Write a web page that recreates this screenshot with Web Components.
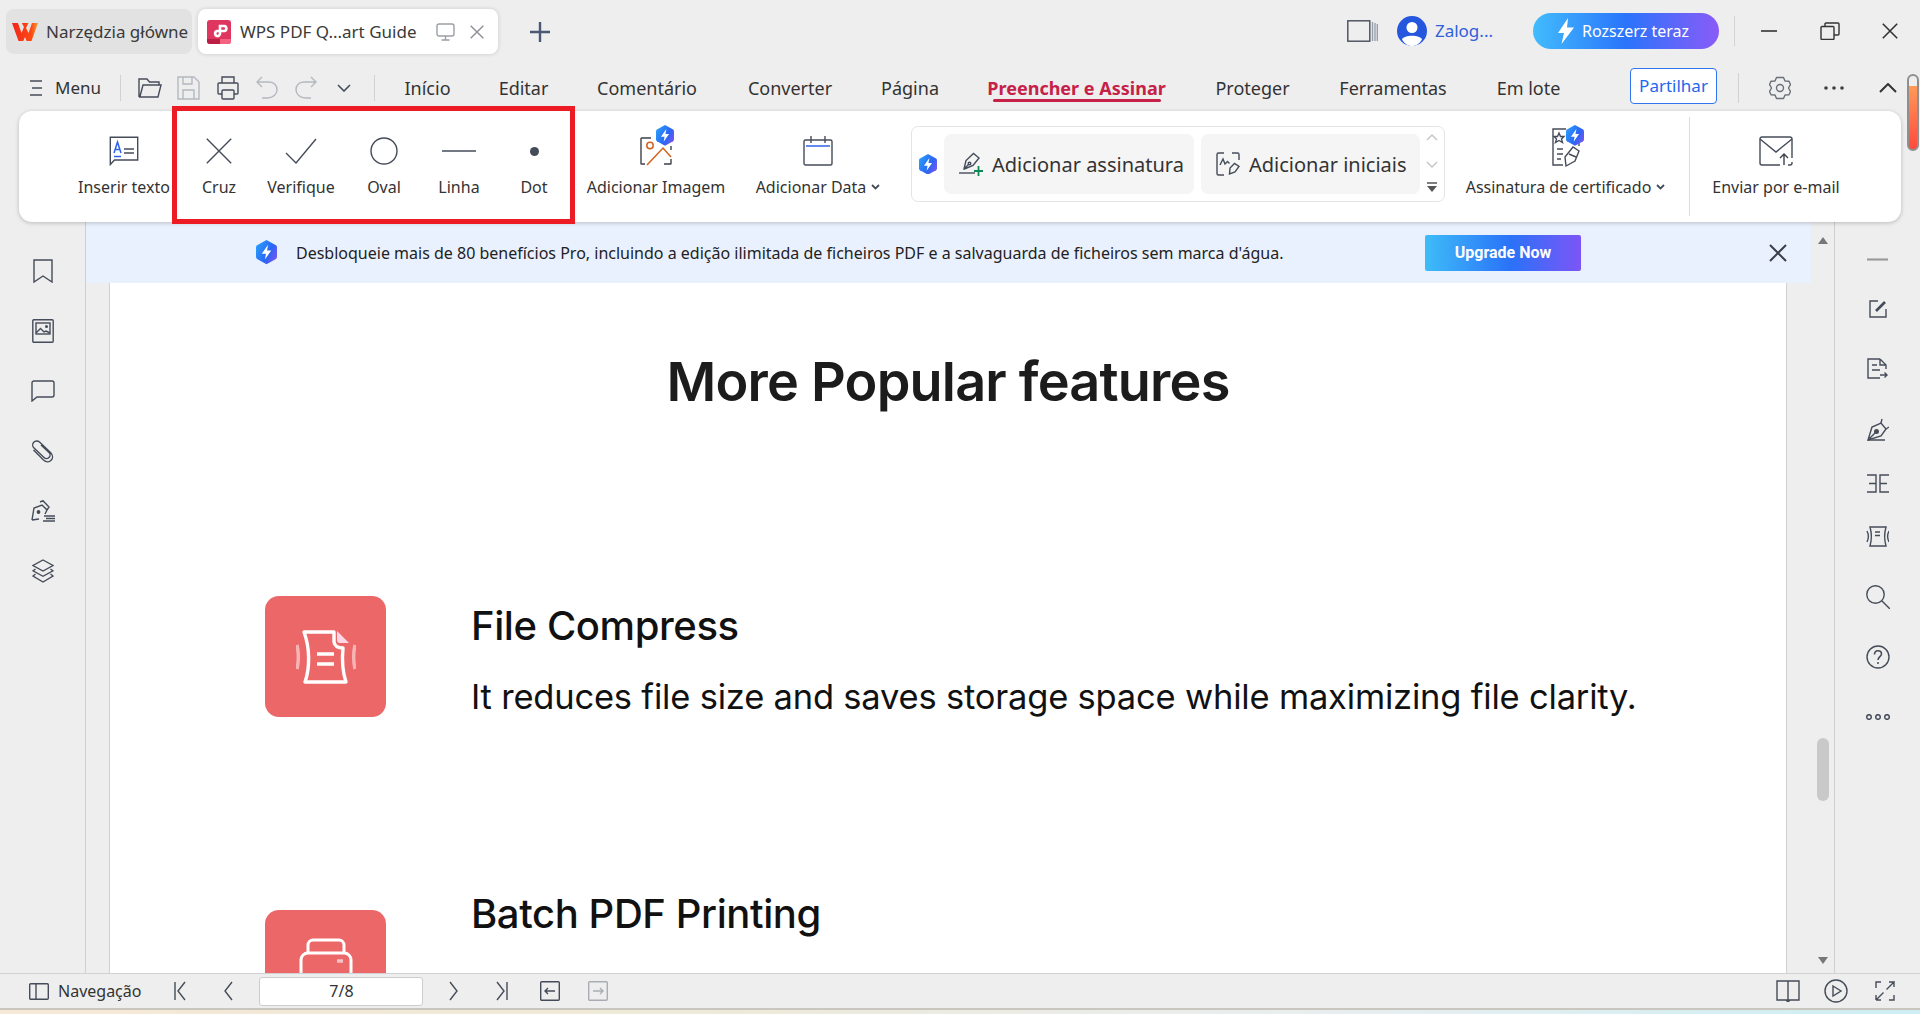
<!DOCTYPE html>
<html lang="pt">
<head>
<meta charset="utf-8">
<title>WPS PDF</title>
<style>
    html, body { margin: 0; height: 100%; }
    body { overflow: hidden; background: #eeeeee; font-family: "Noto Sans", "Open Sans", sans-serif; color: #333; }
</style>
</head>
<body>
<wps-app></wps-app>
<script>
(function (){
    /* Icon artwork: [viewBox width, viewBox height, markup]. */
    const ICONS = {
        wps: [26, 20, `<defs><linearGradient id="w" x1="0" x2="1"><stop offset="0" stop-color="#f0261a"/><stop offset="0.75" stop-color="#ff4a12"/><stop offset="1" stop-color="#e9a23a"/></linearGradient></defs><path fill="url(#w)" stroke="none" d="M0 1H6L9.5 11 12 5 9.8 1H16.5L14 6 16.5 11 20 1H26L19.5 19H14.6L13 15 11.3 19H6.5ZM12.8 1.5 15 1.5 13.5 4Z"/>`],
        pdf: [24, 24, `<rect width="24" height="24" rx="3" fill="#df3660" stroke="none"/><path d="M0 19H13V24H3A3 3 0 0 1 0 21Z" fill="#bb1e45" stroke="none"/><path d="M13 19H24V21A3 3 0 0 1 21 24H13Z" fill="#f4627f" stroke="none"/><path stroke="#fff" stroke-width="2.6" d="M13 11V6H17.5A2.6 2.6 0 0 1 17.5 11H10A2.6 2.6 0 0 0 10 16 2.6 2.6 0 0 0 13 13.500V11"/>`],
        monitor: [19, 18, `<rect x="1" y="1" width="17" height="12" rx="2"/><path d="M9.500 13V17M5.500 17H13.500"/>`],
        close: [14, 14, `<path d="M.7.7 13.300 13.300M13.300.7.7 13.300"/>`],
        plus: [20, 20, `<path stroke-width="2.4" d="M10 0V20M0 10H20"/>`],
        pages: [31, 22, `<rect x=".8" y=".8" width="22" height="20.400"/><path d="M25.500 2V21M28 3V21M30.300 4V21" stroke="#9aa0ab"/>`],
        avatar: [30, 30, `<circle cx="15" cy="15" r="15" fill="#2457de" stroke="none"/><circle cx="15" cy="11.500" r="5.500" fill="#fff" stroke="none"/><path d="M5 23.500C7 18.500 23 18.500 25 23.500 22.500 28 18.500 30 15 30 11.500 30 7.500 28 5 23.500Z" fill="#fff" stroke="none"/>`],
        bolt: [16, 26, `<path fill="#fff" stroke="none" d="M10 0 0 15H6L3.500 26 16 9.500H9Z"/>`],
        minus: [16, 2, `<path d="M0 1H16"/>`],
        restore: [20, 18, `<rect x="1" y="4.500" width="13" height="13" rx="1"/><path d="M5 4.500V2A1 1 0 0 1 6 1H18A1 1 0 0 1 19 2V12A1 1 0 0 1 18 13H14"/>`],
        hamburger: [12, 16, `<path d="M0 1H12M2 8H12M0 15H12"/>`],
        folder: [24, 22, `<path d="M1 20V2H9L11.500 5H21V8M1 20H20L23 8H5L1.800 20"/>`],
        save: [23, 24, `<path stroke="#b4b8bf" d="M1 1H17L22 6V23H1ZM6 1V8H15V1M6 23V14H17V23"/>`],
        print: [22, 24, `<path d="M5 7V1H17V7M5 18H2A1 1 0 0 1 1 17V8A1 1 0 0 1 2 7H20A1 1 0 0 1 21 8V17A1 1 0 0 1 20 18H17"/><rect x="5" y="14" width="12" height="9" rx="1"/>`],
        undo: [22, 23, `<path stroke="#b4b8bf" d="M6 1 1 6 6 11M1 6H13C24 6 24 22 11 22H6"/>`],
        redo: [22, 23, `<path stroke="#b4b8bf" d="M16 1 21 6 16 11M21 6H9C-2 6-2 22 11 22H16"/>`],
        chevron: [14, 8, `<path stroke-width="1.600" d="M1 1 7 7 13 1"/>`],
        gear: [22, 24, `<path d="M7.500 1.500H14.500L16 5 20 5.300 21.500 8.500 19.500 12 21.500 15.500 20 18.700 16 19 14.500 22.500H7.500L6 19 2 18.700 .5 15.500 2.500 12 .5 8.500 2 5.300 6 5Z" stroke-linejoin="round"/><circle cx="11" cy="12" r="3.500"/>`],
        dots: [20, 4, `<circle cx="2" cy="2" r="1.800" fill="currentColor" stroke="none"/><circle cx="10" cy="2" r="1.800" fill="currentColor" stroke="none"/><circle cx="18" cy="2" r="1.800" fill="currentColor" stroke="none"/>`],
        caretup: [18, 10, `<path stroke-width="2" d="M1 9 9 1 17 9"/>`],
        inserttext: [30, 30, `<path d="M1.300 1.300H28.700V24H5.500L1.300 28.500Z"/><path stroke="#2f62e6" stroke-width="1.500" d="M5 17 8.500 6 12 17M6 13.500H11M5 20.500H12"/><path d="M15 13H25M15 17H25"/>`],
        cross: [26, 26, `<path d="M.8.8 25.200 25.200M25.200.8.8 25.200"/>`],
        check: [32, 26, `<path d="M1 15 11 25 31 1"/>`],
        oval: [28, 28, `<circle cx="14" cy="14" r="13"/>`],
        line: [34, 2, `<path d="M0 1H34"/>`],
        dot: [9, 9, `<circle cx="4.500" cy="4.500" r="4.500" fill="currentColor" stroke="none"/>`],
        image: [32, 30, `<path stroke="#3d4249" d="M11 2H1.500A.5.5 0 0 0 1 2.500V27.500A.5.5 0 0 0 1.500 28H5M24 28H30.500A.5.5 0 0 0 31 27.500V23"/><path stroke="#3d4249" d="M31 10V14"/><circle cx="10" cy="9.500" r="3.200" stroke="#d2611c" stroke-width="1.500"/><path stroke="#d2611c" stroke-width="1.500" d="M7 29 23 12 31 21"/>`],
        calendar: [30, 30, `<rect x="1" y="4" width="28" height="25" rx="1.500"/><path d="M8 0V7M22 0V7"/><path stroke="#2f62e6" stroke-width="1.500" d="M3 10H27"/>`],
        signplus: [24, 24, `<path d="M0 21H16"/><path d="M5 17 7 8.500 14.500 1.500 20 6 14 13.500 5.500 17ZM5.500 16.500 10 12"/><circle cx="10.500" cy="11.500" r="1.300"/><path stroke="#0c8a55" stroke-width="1.800" d="M19.500 14V24M15 19H24"/>`],
        initials: [24, 24, `<path d="M8 1H2.500A1.500 1.500 0 0 0 1 2.500V21.500A1.500 1.500 0 0 0 2.500 23H8M16 1H21.500A1.500 1.500 0 0 1 23 2.500V8"/><path d="M4 13 7 7 9 12 11.500 9.500 13.500 11.500"/><path d="M13.500 22 14 16 18.500 11.500 23 14.500 19 20 Z"/>`],
        cert: [28, 40, `<path d="M14 1H1V37H11"/><path d="M27 6V18"/><path d="M7 5 8.500 8.500H12L9.500 11 10.500 14.500 7 12.500 3.500 14.500 4.500 11 2 8.500H5.500Z"/><path d="M5 21H11M5 26H11M5 31H9"/><path d="M14 38 13 29 21 19 27 23 23 33Z"/><path d="M17 26 24 29"/>`],
        mail: [34, 30, `<path d="M33 22V3A2 2 0 0 0 31 1H3A2 2 0 0 0 1 3V27A2 2 0 0 0 3 29H21M29 29H31A2 2 0 0 0 33 27V26"/><path d="M1 3 17 16 33 3"/><path d="M25 29V18M21 22 25 18 29 22" stroke="#3d4249"/>`],
        updown: [12, 62, `<path stroke="#c4c6ca" stroke-width="1.500" d="M1 7 6 2 11 7M1 29 6 34 11 29"/><path stroke="#555" stroke-width="1.500" d="M1 50H11"/><path fill="#555" stroke="none" d="M1 53H11L6 59Z"/>`],
        caretdown: [9, 6, `<path stroke-width="1.800" d="M1 1 4.500 4.500 8 1"/>`],
        bookmark: [20, 24, `<path d="M1 1H19V23L10 17 1 23Z"/>`],
        picture: [22, 24, `<rect x=".8" y=".8" width="20.400" height="22.400" rx="1"/><rect x="4" y="4" width="14" height="11"/><path d="M4 14 8.500 9.500 12 13 14 12 18 14"/><circle cx="14.500" cy="7.500" r=".8"/>`],
        comment: [24, 22, `<path d="M3 1H21A2 2 0 0 1 23 3V15A2 2 0 0 1 21 17H6L1 21V3A2 2 0 0 1 3 1Z"/>`],
        clip: [24, 23, `<path d="M10 5 18 12.500A3.500 3.500 0 0 1 13 17.500L3 8A4 4 0 0 1 8.500 2L19.500 12.500C25 18 18 25 12.500 20L2.500 10"/>`],
        penlines: [24, 22, `<path d="M1 20 3 8 11 5 16 10 14 14M1 20 8 19M9 2 12 .7 18 7 16 10"/><circle cx="7.500" cy="12" r="1.200" fill="currentColor"/><path d="M13 16H24M15 18.500H24M12 21H24"/>`],
        layers: [22, 24, `<path d="M11 1 21 6.500 11 12 1 6.500Z"/><path d="M3.500 10 1 11.800 11 17.300 21 11.800 18.500 10"/><path d="M3.500 15 1 17 11 23 21 17 18.500 15"/>`],
        edit: [18, 18, `<path d="M9 1H1V17H17V9"/><path stroke-width="2.600" d="M7 11 16 2"/>`],
        docmove: [21, 21, `<path d="M13 1H1V20H13M13 1 19 7V11M13 1V7H19M5 7H10M5 12H13"/><path d="M13 17H20M17.500 14.500 20 17 17.500 19.500"/>`],
        nib: [22, 23, `<path d="M1 22 5 9 14 5 19 11 14 18ZM1 22 9 14"/><circle cx="9.500" cy="13.500" r="1.800" fill="currentColor"/><path d="M14 5 15 1M19 11 22 9M1 22H18"/>`],
        split: [22, 19, `<path d="M0 1H9V18H0M2 9.500H9M22 1H13V18H22M13 9.500H20"/>`],
        shrink: [23, 21, `<path d="M4 1H20C18 8 18 13 20 20H4C6 13 6 8 4 1ZM9 6H14M9 9.500H14"/><path d="M1 5C3 9 3 12 1 16M23 5C21 9 21 12 23 16"/>`],
        search: [24, 24, `<circle cx="9.500" cy="9.500" r="8.700"/><path d="M16 16 24 24"/>`],
        help: [24, 24, `<circle cx="12" cy="12" r="11"/><path stroke-width="1.600" d="M8.500 9.500C8.500 4.500 15.500 4.500 15.500 9C15.500 11.500 12 12 12 15"/><circle cx="12" cy="18" r="1" fill="currentColor" stroke="none"/>`],
        ring3: [24, 6, `<circle cx="3" cy="3" r="2.300" stroke-width="1.500"/><circle cx="12" cy="3" r="2.300" stroke-width="1.500"/><circle cx="21" cy="3" r="2.300" stroke-width="1.500"/>`],
        close2: [18, 18, `<path stroke-width="2" d="M1 1 17 17M17 1 1 17"/>`],
        panel: [20, 17, `<rect x=".7" y=".7" width="18.600" height="15.600" rx="1"/><path d="M7 1V16"/>`],
        first: [12, 20, `<path d="M1 1V19M11 1 4 10 11 19"/>`],
        prev: [9, 20, `<path d="M8 1 1 10 8 19"/>`],
        next: [9, 20, `<path d="M1 1 8 10 1 19"/>`],
        last: [12, 20, `<path d="M11 1V19M1 1 8 10 1 19"/>`],
        boxback: [20, 20, `<rect x=".7" y=".7" width="18.600" height="18.600" rx="1"/><path d="M15 10H5M8 7 5 10 8 13"/>`],
        boxfwd: [20, 20, `<rect x=".7" y=".7" width="18.600" height="18.600" rx="1" stroke="#a9adb3"/><path stroke="#a9adb3" d="M5 10H15M12 7 15 10 12 13"/>`],
        book: [24, 22, `<path d="M1 1H12V20H1ZM12 1H23V20H12ZM10 20 12 22 14 20"/>`],
        play: [24, 24, `<circle cx="12" cy="12" r="11"/><path d="M9 7 17 12 9 17Z"/>`],
        fullscreen: [20, 20, `<path d="M1 7V1H6M14 1H19L11.500 8.500M19 1V6M1 19H6M1 19 8.500 11.500M1 14V19M19 14V19H14"/>`],
        compress: [60, 58, `<path d="M8 4H38L38 14Q39 20 47 20C46 30 46 42 50 54H9C14 40 14 20 8 4Z" stroke-linejoin="round"/><path fill="#fde" stroke="none" opacity=".95" d="M41 3 53 15H44Q41 15 41 12Z"/><path d="M21 26H38M21 36H38"/><path opacity=".5" stroke-width="3.500" d="M1 17C3 26 3 32 1 41M59 17C57 26 57 32 59 41"/>`],
        printer: [54, 50, `<rect x="9" y="2" width="36" height="22" rx="5"/><rect x="2" y="15" width="50" height="40" rx="7" fill="#ec6868"/><path opacity=".6" d="M38 23H44" stroke-width="3.500"/>`],
    };

    class UiIcon extends HTMLElement {
        connectedCallback() {
            const [vw, vh, art] = ICONS[this.getAttribute("name")];
            const w = this.getAttribute("w") || vw;
            const h = this.getAttribute("h") || vh;
            const sw = this.getAttribute("sw") || 1.4;
            this.attachShadow({ mode: "open" }).innerHTML = `
            <style>
                :host { display: inline-flex; flex: none; color: #454c59; }
                svg { display: block; fill: none; stroke: currentColor; }
            </style>
            <svg width="${w}" height="${h}" viewBox="0 0 ${vw} ${vh}" stroke-width="${sw}">${art}</svg>`;
        }
    }
    customElements.define("ui-icon", UiIcon);

    class ProBadge extends HTMLElement {
        connectedCallback() {
            const size = this.getAttribute("size") || 18;
            this.attachShadow({ mode: "open" }).innerHTML = `
            <style>:host { display: inline-flex; flex: none; } svg { display: block; }</style>
            <svg width="${size}" height="${size * 1.15}" viewBox="0 0 20 23">
                <defs><linearGradient id="b" x1="0" x2="1" y1=".2" y2=".8"><stop offset="0" stop-color="#2b9dfb"/><stop offset="0.6" stop-color="#2a66f5"/><stop offset="1" stop-color="#7a55f0"/></linearGradient></defs>
                <path fill="url(#b)" d="M10 0 19 5Q20 5.600 20 7V16Q20 17.400 19 18L10 23 1 18Q0 17.400 0 16V7Q0 5.600 1 5Z"/>
                <path fill="#fff" d="M11.500 4.500 5.500 13H9.500L8.500 18.500 14.500 10H10.500Z"/>
            </svg>`;
        }
    }
    customElements.define("pro-badge", ProBadge);

    const tabTemplate = document.createElement("template");
    tabTemplate.innerHTML = `
    <style>
        :host {
            display: flex;
            align-items: center;
            box-sizing: border-box;
            height: 45px;
            border-radius: 8px;
            font-size: 17px;
            color: #3a3a3a;
            white-space: nowrap;
        }
        :host([active]) { background: #fff; box-shadow: 0 0 4px rgba(0,0,0,.16); }
        :host(:not([active])) { background: #e2e2e2; }
        ::slotted(ui-icon) { margin-right: var(--icon-gap, 9px); }
    </style>
    <slot></slot>
    `;

    class WpsTab extends HTMLElement {
        constructor() {
            super();
            this.attachShadow({ mode: "open" }).appendChild(tabTemplate.content.cloneNode(true));
        }
    }
    customElements.define("wps-tab", WpsTab);

    class WpsTabbar extends HTMLElement {
        constructor() {
            super();
            this.attachShadow({ mode: "open" }).innerHTML = `
            <style>
                :host { display: flex; align-items: flex-start; height: 64px; padding: 9px 0 0 6px; box-sizing: border-box; }
                .right { margin-left: auto; display: flex; align-items: center; height: 45px; margin-top: -1px; }
                .login { color: #2f5fdc; font-size: 17px; margin: 0 40px 0 8px; }
                .upgrade {
                    display: flex; align-items: center; width: 186px; height: 36px; box-sizing: border-box;
                    padding-left: 25px; border-radius: 18px; color: #fff; font-size: 16px;
                    background: linear-gradient(90deg, #42bcfd 0%, #2a74fb 50%, #8a5bf8 100%);
                }
                .sep { width: 1px; height: 30px; background: #d4d4d4; margin: 0 26px 0 15px; }
            </style>
            <wps-tab style="width:186px;padding-left:6px;--icon-gap:8px"><ui-icon name="wps" w="26" h="20"></ui-icon>Narzędzia główne</wps-tab>
            <wps-tab active style="width:300px;margin-left:6px;padding-left:9px;--icon-gap:9px"><ui-icon name="pdf"></ui-icon><span style="width:196px">WPS PDF Q...art Guide</span><ui-icon name="monitor" style="color:#9a9ea5;--x:0"></ui-icon><ui-icon name="close" style="color:#8b8e94;margin-left:6px"></ui-icon></wps-tab>
            <ui-icon name="plus" style="margin:13px 0 0 32px;color:#4a5875"></ui-icon>
            <div class="right">
                <ui-icon name="pages" style="margin-right:19px"></ui-icon>
                <ui-icon name="avatar"></ui-icon>
                <span class="login">Zalog...</span>
                <div class="upgrade"><ui-icon name="bolt" style="margin-right:8px"></ui-icon>Rozszerz teraz</div>
                <div class="sep"></div>
                <ui-icon name="minus" sw="1.600" style="margin-right:43px;color:#333"></ui-icon>
                <ui-icon name="restore" style="margin-right:42px;color:#333"></ui-icon>
                <ui-icon name="close" w="16" h="16" style="margin-right:22px;color:#333"></ui-icon>
            </div>`;
        }
    }
    customElements.define("wps-tabbar", WpsTabbar);

    class MenuTab extends HTMLElement {
        constructor() {
            super();
            this.attachShadow({ mode: "open" }).innerHTML = `
            <style>
                :host { display: flex; flex: none; justify-content: center; align-items: center; position: relative; height: 100%; font-size: 18px; color: #333; white-space: nowrap; }
                :host([active]) { color: #c62148; font-weight: 700; }
                :host([active])::after { content: ""; position: absolute; left: 31px; right: 30px; bottom: 9px; height: 3px; border-radius: 2px; background: #c62148; }
            </style>
            <slot></slot>`;
        }
    }
    customElements.define("menu-tab", MenuTab);

    class WpsMenubar extends HTMLElement {
        constructor() {
            super();
            this.attachShadow({ mode: "open" }).innerHTML = `
            <style>
                :host { display: flex; align-items: center; height: 47px; padding-left: 30px; box-sizing: border-box; }
                .menu { font-size: 17px; margin: 0 19px 0 13px; color: #333; }
                .sep { width: 1px; height: 26px; background: #d2d2d2; flex: none; }
                .share {
                    display: flex; align-items: center; justify-content: center; width: 87px; height: 36px; box-sizing: border-box;
                    border: 1px solid #2f74f0; border-radius: 4px; background: #fff; color: #2168ee; font-size: 17px; margin: -4px 21px 0 45px;
                }
            </style>
            <ui-icon name="hamburger"></ui-icon>
            <span class="menu">Menu</span>
            <div class="sep"></div>
            <ui-icon name="folder" style="margin-left:17px"></ui-icon>
            <ui-icon name="save" style="margin-left:15px"></ui-icon>
            <ui-icon name="print" style="margin-left:17px"></ui-icon>
            <ui-icon name="undo" style="margin-left:17px"></ui-icon>
            <ui-icon name="redo" style="margin-left:17px"></ui-icon>
            <ui-icon name="chevron" style="margin-left:20px"></ui-icon>
            <div class="sep" style="margin-left:23px;margin-right:5px"></div>
            <menu-tab style="width:95px">Início</menu-tab>
            <menu-tab style="width:97px">Editar</menu-tab>
            <menu-tab style="width:150px">Comentário</menu-tab>
            <menu-tab style="width:136px">Converter</menu-tab>
            <menu-tab style="width:104px">Página</menu-tab>
            <menu-tab active style="width:229px">Preencher e Assinar</menu-tab>
            <menu-tab style="width:123px">Proteger</menu-tab>
            <menu-tab style="width:158px">Ferramentas</menu-tab>
            <menu-tab style="width:113px">Em lote</menu-tab>
            <div class="share">Partilhar</div>
            <div class="sep" style="height:30px"></div>
            <ui-icon name="gear" style="margin-left:30px;color:#6a6f77"></ui-icon>
            <ui-icon name="dots" style="margin-left:33px;color:#3e3e3e"></ui-icon>
            <ui-icon name="caretup" style="margin-left:35px;color:#333"></ui-icon>`;
        }
    }
    customElements.define("wps-menubar", WpsMenubar);

    const toolTemplate = document.createElement("template");
    toolTemplate.innerHTML = `
    <style>
        :host {
            display: flex;
            flex: none;
            flex-direction: column;
            align-items: center;
            box-sizing: border-box;
            padding-top: 18px;
            font-size: 16px;
            color: #333;
            white-space: nowrap;
        }
        .icon { position: relative; display: flex; align-items: center; justify-content: center; align-self: stretch; height: 44px; }
        .label { display: flex; align-items: center; height: 22px; margin-top: 3px; }
        ::slotted(pro-badge) { position: absolute; left: 50%; top: -4px; }
    </style>
    <div class="icon"><slot name="icon"></slot><slot name="badge"></slot></div>
    <div class="label"><slot></slot></div>
    `;

    class RibbonTool extends HTMLElement {
        constructor() {
            super();
            this.attachShadow({ mode: "open" }).appendChild(toolTemplate.content.cloneNode(true));
        }
    }
    customElements.define("ribbon-tool", RibbonTool);

    class SignButton extends HTMLElement {
        constructor() {
            super();
            this.attachShadow({ mode: "open" }).innerHTML = `
            <style>
                :host { display: flex; flex: none; align-items: center; gap: 9px; box-sizing: border-box; height: 60px; padding-left: 15px; border-radius: 7px; background: #f5f5f5; font-size: 20px; color: #333; white-space: nowrap; }
            </style>
            <slot></slot>`;
        }
    }
    customElements.define("sign-button", SignButton);

    class WpsRibbon extends HTMLElement {
        constructor() {
            super();
            this.attachShadow({ mode: "open" }).innerHTML = `
            <style>
                :host {
                    display: flex; position: relative; height: 111px; box-sizing: border-box; margin: 0 19px 0 19px;
                    padding-left: 43px; background: #fff; border-radius: 13px; box-shadow: 0 1px 4px rgba(0,0,0,.22); z-index: 2;
                }
                .group {
                    display: flex; flex: none; align-items: center; box-sizing: border-box; width: 534px; height: 76px;
                    margin: 15px 0 0 19px; padding-left: 7px; border: 1px solid #e4e4e4; border-radius: 7px;
                }
                .sep { width: 1px; height: 99px; margin-top: 6px; background: #dcdcdc; flex: none; }
                .highlight { position: absolute; left: 153px; top: -5px; width: 403px; height: 118px; box-sizing: border-box; border: 5px solid #ed1c24; pointer-events: none; }
                .caret { margin-left: 5px; }
            </style>
            <ribbon-tool style="width:124px"><ui-icon slot="icon" name="inserttext"></ui-icon>Inserir texto</ribbon-tool>
            <ribbon-tool style="width:66px"><ui-icon slot="icon" name="cross"></ui-icon>Cruz</ribbon-tool>
            <ribbon-tool style="width:98px"><ui-icon slot="icon" name="check"></ui-icon>Verifique</ribbon-tool>
            <ribbon-tool style="width:68px"><ui-icon slot="icon" name="oval"></ui-icon>Oval</ribbon-tool>
            <ribbon-tool style="width:82px"><ui-icon slot="icon" name="line"></ui-icon>Linha</ribbon-tool>
            <ribbon-tool style="width:68px"><ui-icon slot="icon" name="dot"></ui-icon>Dot</ribbon-tool>
            <ribbon-tool style="width:176px"><ui-icon slot="icon" name="image"></ui-icon><pro-badge slot="badge"></pro-badge>Adicionar Imagem</ribbon-tool>
            <ribbon-tool style="width:148px"><ui-icon slot="icon" name="calendar"></ui-icon>Adicionar Data<ui-icon class="caret" name="caretdown"></ui-icon></ribbon-tool>
            <div class="group">
                <pro-badge></pro-badge>
                <sign-button style="width:250px;margin-left:7px"><ui-icon name="signplus"></ui-icon>Adicionar assinatura</sign-button>
                <sign-button style="width:219px;margin-left:7px"><ui-icon name="initials"></ui-icon>Adicionar iniciais</sign-button>
                <ui-icon name="updown" style="margin-left:6px"></ui-icon>
            </div>
            <ribbon-tool style="width:241px"><ui-icon slot="icon" name="cert" style="margin-top:-6px"></ui-icon><pro-badge slot="badge"></pro-badge>Assinatura de certificado<ui-icon class="caret" name="caretdown"></ui-icon></ribbon-tool>
            <div class="sep" style="margin-left:3px"></div>
            <ribbon-tool style="width:172px"><ui-icon slot="icon" name="mail"></ui-icon>Enviar por e-mail</ribbon-tool>
            <div class="highlight"></div>`;
        }
    }
    customElements.define("wps-ribbon", WpsRibbon);

    class SideRail extends HTMLElement {
        constructor() {
            super();
            this.attachShadow({ mode: "open" }).innerHTML = `
            <style>
                :host { display: flex; flex: none; flex-direction: column; align-items: center; box-sizing: border-box; width: 85px; }
                ::slotted(ui-icon) { position: relative; }
            </style>
            <slot></slot>`;
        }
    }
    customElements.define("side-rail", SideRail);

    class PromoBanner extends HTMLElement {
        constructor() {
            super();
            this.attachShadow({ mode: "open" }).innerHTML = `
            <style>
                :host { display: flex; flex: none; align-items: center; height: 61px; padding-left: 170px; background: #eaf1fe; font-size: 16px; color: #222; white-space: nowrap; }
                .txt { margin-left: 19px; width: 1129px; }
                .btn {
                    display: flex; align-items: center; justify-content: center; width: 156px; height: 36px;
                    background: linear-gradient(90deg, #3ebcf8 0%, #2a72f8 55%, #7d55f6 100%); border-radius: 2px;
                    color: #fff; font-size: 16px; font-weight: 700; font-family: "Roboto", sans-serif;
                }
            </style>
            <pro-badge size="21"></pro-badge>
            <span class="txt"><slot></slot></span>
            <div class="btn">Upgrade Now</div>
            <ui-icon name="close2" style="margin-left:188px;color:#3a3f48"></ui-icon>`;
        }
    }
    customElements.define("promo-banner", PromoBanner);

    class FeatureRow extends HTMLElement {
        constructor() {
            super();
            this.attachShadow({ mode: "open" }).innerHTML = `
            <style>
                :host { display: flex; align-items: flex-start; padding-left: 155px; font-family: "Inter", "Noto Sans", sans-serif; color: #111; }
                .tile { display: flex; flex: none; justify-content: center; width: 121px; height: 121px; margin-top: var(--tile-top, 0); border-radius: 14px; background: #ec6868; box-sizing: border-box; padding-top: var(--art-top, 32px); color: #fff; }
                .body { margin: var(--text-top, 0) 0 0 85px; }
                h3 { margin: 0; font-size: 40px; line-height: 48px; font-weight: 500; letter-spacing: -.4px; }
                p { margin: 23px 0 0; font-size: 34.500px; line-height: 48px; font-weight: 400; white-space: nowrap; letter-spacing: -.2px; }
            </style>
            <div class="tile"><slot name="art"></slot></div>
            <div class="body">
                <h3><slot name="title"></slot></h3>
                <p><slot name="desc"></slot></p>
            </div>`;
        }
    }
    customElements.define("feature-row", FeatureRow);

    class DocPage extends HTMLElement {
        constructor() {
            super();
            this.attachShadow({ mode: "open" }).innerHTML = `
            <style>
                :host { display: block; box-sizing: border-box; height: 100%; margin: 0 24px 0 23px; background: #fff; border: solid #cfcfcf; border-width: 0 1px; overflow: hidden; padding-top: 66px; }
                h1 { margin: 0; text-align: center; font: 600 54px/66px "Inter", "Noto Sans", sans-serif; color: #1c1c1c; letter-spacing: -.8px; }
            </style>
            <h1>More Popular features</h1>
            <slot></slot>`;
        }
    }
    customElements.define("doc-page", DocPage);

    class DocViewport extends HTMLElement {
        constructor() {
            super();
            this.attachShadow({ mode: "open" }).innerHTML = `
            <style>
                :host { display: flex; flex: 1; min-width: 0; border: solid #cfcfcf; border-width: 0 1px; height: 751px; }
                .col { display: flex; flex: 1; flex-direction: column; min-width: 0; }
                .page { flex: 1; min-height: 0; }
                .rail { display: flex; flex: none; flex-direction: column; align-items: center; box-sizing: border-box; width: 23px; padding: 15px 0 9px; margin-left: 0; }
                .up, .down { width: 0; height: 0; border: 5px solid transparent; }
                .up { border-bottom: 7px solid #777; border-top: 0; }
                .down { border-top: 7px solid #777; border-bottom: 0; margin-top: auto; }
                .thumb { width: 12px; height: 63px; margin-top: 494px; border-radius: 6px; background: #c9c9c9; }
            </style>
            <div class="col">
                <promo-banner>Desbloqueie mais de 80 benefícios Pro, incluindo a edição ilimitada de ficheiros PDF e a salvaguarda de ficheiros sem marca d'água.</promo-banner>
                <div class="page"><slot></slot></div>
            </div>
            <div class="rail"><div class="up"></div><div class="thumb"></div><div class="down"></div></div>`;
        }
    }
    customElements.define("doc-viewport", DocViewport);

    class StatusBar extends HTMLElement {
        constructor() {
            super();
            this.attachShadow({ mode: "open" }).innerHTML = `
            <style>
                :host { display: flex; align-items: center; box-sizing: border-box; height: 35px; padding-left: 29px; border-top: 1px solid #d2d2d2; font-size: 16px; color: #333; }
                .nav { margin: 0 33px 0 9px; }
                .page {
                    display: flex; align-items: center; justify-content: center; width: 164px; height: 29px; box-sizing: border-box;
                    margin: 0 26px 0 26px; background: #fff; border: 1px solid #cdcdcd; border-radius: 3px;
                }
            </style>
            <ui-icon name="panel"></ui-icon>
            <span class="nav">Navegação</span>
            <ui-icon name="first"></ui-icon>
            <ui-icon name="prev" style="margin-left:38px"></ui-icon>
            <div class="page">7/8</div>
            <ui-icon name="next"></ui-icon>
            <ui-icon name="last" style="margin-left:38px"></ui-icon>
            <ui-icon name="boxback" style="margin-left:32px"></ui-icon>
            <ui-icon name="boxfwd" style="margin-left:28px"></ui-icon>
            <ui-icon name="book" style="margin-left:auto"></ui-icon>
            <ui-icon name="play" style="margin-left:24px"></ui-icon>
            <ui-icon name="fullscreen" style="margin:0 25px 0 27px"></ui-icon>`;
        }
    }
    customElements.define("status-bar", StatusBar);

    class WpsApp extends HTMLElement {
        constructor() {
            super();
            this.attachShadow({ mode: "open" }).innerHTML = `
            <style>
                :host { display: flex; flex-direction: column; position: relative; width: 1920px; height: 1014px; overflow: hidden; background: #eeeeee; }
                .work { display: flex; height: 751px; }
                .strip { flex: 1; border-top: 2px solid #c9c6bf; background: linear-gradient(90deg, #f6e8d6 0%, #eee9d8 35%, #e8eef0 70%, #cdeef3 100%); }
                .scroll {
                    position: absolute; left: 1907px; top: 74px; width: 12px; height: 77px; box-sizing: border-box;
                    border: 2px solid #8f8f8f; border-radius: 6px;
                    background: linear-gradient(#eeeeee 0 14%, #ff9a58 14%, #ff4a3e 100%);
                }
                .rail-l { padding-top: 37px; gap: 0; }
                .rail-r { padding-top: 36px; }
            </style>
            <wps-tabbar></wps-tabbar>
            <wps-menubar></wps-menubar>
            <wps-ribbon></wps-ribbon>
            <div class="work">
                <side-rail class="rail-l">
                    <ui-icon name="bookmark" style="margin-bottom:36px"></ui-icon>
                    <ui-icon name="picture" style="margin-bottom:37px"></ui-icon>
                    <ui-icon name="comment" style="margin-bottom:38px"></ui-icon>
                    <ui-icon name="clip" style="margin-bottom:37px"></ui-icon>
                    <ui-icon name="penlines" style="margin-bottom:37px"></ui-icon>
                    <ui-icon name="layers"></ui-icon>
                </side-rail>
                <doc-viewport>
                    <doc-page>
                        <feature-row style="margin-top:181px;--text-top:6px">
                            <ui-icon slot="art" name="compress" sw="3.400" style="color:#fff"></ui-icon>
                            <span slot="title">File Compress</span>
                            <span slot="desc">It reduces file size and saves storage space while maximizing file clarity.</span>
                        </feature-row>
                        <feature-row style="margin-top:169px;--tile-top:20px;--art-top:28px">
                            <ui-icon slot="art" name="printer" sw="3" style="color:#fff"></ui-icon>
                            <span slot="title">Batch PDF Printing</span>
                        </feature-row>
                    </doc-page>
                </doc-viewport>
                <side-rail class="rail-r">
                    <ui-icon name="minus" w="21" h="3" sw="1.600" style="color:#999;margin-bottom:39px"></ui-icon>
                    <ui-icon name="edit" style="margin-bottom:40px"></ui-icon>
                    <ui-icon name="docmove" style="margin-bottom:39px"></ui-icon>
                    <ui-icon name="nib" style="margin-bottom:33px"></ui-icon>
                    <ui-icon name="split" style="margin-bottom:33px"></ui-icon>
                    <ui-icon name="shrink" style="margin-bottom:38px"></ui-icon>
                    <ui-icon name="search" style="margin-bottom:36px"></ui-icon>
                    <ui-icon name="help" style="margin-bottom:45px"></ui-icon>
                    <ui-icon name="ring3"></ui-icon>
                </side-rail>
            </div>
            <status-bar></status-bar>
            <div class="strip"></div>
            <div class="scroll"></div>`;
        }
    }
    customElements.define("wps-app", WpsApp);
})();
</script>
</body>
</html>
